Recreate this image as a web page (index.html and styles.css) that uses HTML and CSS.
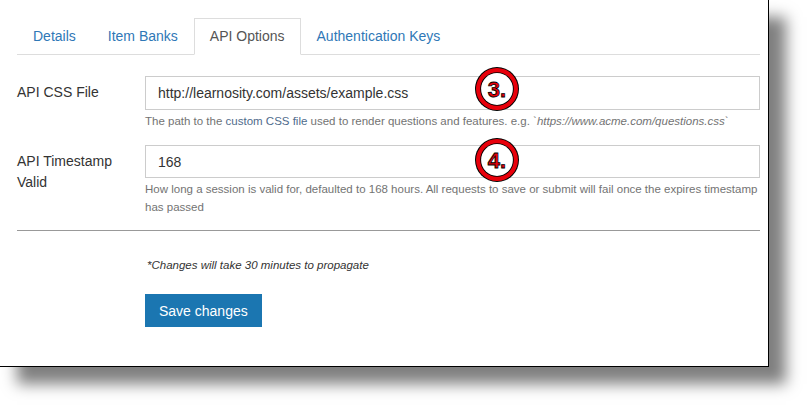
FILE: index.html
```html
<!DOCTYPE html>
<html lang="en">

<head>
    <meta charset="UTF-8">
    <title>API Options</title>
    <link rel="stylesheet" href="styles.css">
</head>

<body>
    <div class="panel">
        <ul class="nav-tabs">
            <li><a href="#">Details</a></li>
            <li><a href="#">Item Banks</a></li>
            <li class="active"><a href="#">API Options</a></li>
            <li><a href="#">Authentication Keys</a></li>
        </ul>

        <form class="settings">
            <div class="form-group first">
                <label class="control-label">API CSS File</label>
                <div class="field">
                    <input class="form-control" type="text" value="http://learnosity.com/assets/example.css">
                    <p class="help-block">The path to the <span class="hl">custom CSS file</span> used to render questions and features. e.g. <em>`https://www.acme.com/questions.css`</em></p>
                    <svg class="callout" width="48" height="48" viewBox="0 0 48 48">
                        <circle cx="24" cy="24" r="22" fill="#000"/>
                        <circle cx="24" cy="24" r="21" fill="#e8000b"/>
                        <circle cx="24" cy="24" r="16.8" fill="#000"/>
                        <circle cx="24" cy="24" r="15.9" fill="#fff"/>
                        <text x="24" y="32" text-anchor="middle">3.</text>
                    </svg>
                </div>
            </div>

            <div class="form-group second">
                <label class="control-label">API Timestamp Valid</label>
                <div class="field">
                    <input class="form-control" type="text" value="168">
                    <p class="help-block">How long a session is valid for, defaulted to 168 hours. All requests to save or submit will fail once the expires timestamp has passed</p>
                    <svg class="callout" width="48" height="48" viewBox="0 0 48 48">
                        <circle cx="24" cy="24" r="22" fill="#000"/>
                        <circle cx="24" cy="24" r="21" fill="#e8000b"/>
                        <circle cx="24" cy="24" r="16.8" fill="#000"/>
                        <circle cx="24" cy="24" r="15.9" fill="#fff"/>
                        <text x="24" y="32" text-anchor="middle">4.</text>
                    </svg>
                </div>
            </div>

            <hr>

            <div class="actions">
                <p class="note">*Changes will take 30 minutes to propagate</p>
                <button type="button" class="btn-primary">Save changes</button>
            </div>
        </form>
    </div>
</body>

</html>
```

FILE: styles.css
```css
html,
body {
    height: 406px;
}

body {
    margin: 0;
    background-color: #fff;
    font-family: "Liberation Sans", Arial, sans-serif;
    font-size: 14px;
    color: #333;
}

.panel {
    width: 769px;
    height: 367px;
    padding-top: 18px;
    box-sizing: border-box;
    background-color: #fff;
    border-right: 1px solid #000;
    border-bottom: 1px solid #000;
    box-shadow: 17px 17px 14px rgba(0, 0, 0, 0.5);
}

.nav-tabs {
    display: flex;
    list-style: none;
    margin: 0 8px 0 17px;
    padding: 0;
    border-bottom: 1px solid #ddd;
}

.nav-tabs li {
    margin-bottom: -1px;
}

.nav-tabs a {
    display: block;
    padding: 8px 15px;
    line-height: 19px;
    border: 1px solid transparent;
    color: #2f78b7;
    text-decoration: none;
}

.nav-tabs .active a {
    color: #555;
    background-color: #fff;
    border-color: #ddd;
    border-bottom-color: transparent;
}

.settings {
    margin: 21px 8px 0 17px;
}

.form-group {
    display: flex;
}

.form-group.first {
    margin-bottom: 15px;
}

.control-label {
    width: 128px;
    flex: none;
    padding-top: 6px;
    line-height: 21px;
    padding-right: 20px;
    box-sizing: border-box;
}

.field {
    flex: 1;
    position: relative;
}

.form-control {
    display: block;
    width: 100%;
    height: 34px;
    box-sizing: border-box;
    padding: 6px 12px;
    border: 1px solid #ccc;
    font-family: inherit;
    font-size: 14px;
    color: #333;
    background-color: #fff;
}

.second .form-control {
    height: 33px;
}

.help-block {
    margin: 2px -6px 0 0;
    font-size: 11.5px;
    line-height: 18px;
    color: #737373;
}

.help-block .hl {
    color: #4f6b8c;
}

.callout {
    position: absolute;
    left: 328px;
    top: -11px;
}

.second .callout {
    top: -9px;
}

.callout text {
    font-family: "Liberation Sans", Arial, sans-serif;
    font-size: 22px;
    font-weight: bold;
    fill: #e8000b;
    stroke: #000;
    stroke-width: 0.8px;
}

hr {
    margin: 14px 0 0;
    border: 0;
    border-top: 1px solid #999;
}

.actions {
    padding-left: 128px;
}

.note {
    margin: 26px 0 0 2px;
    font-size: 11.5px;
    line-height: 17px;
    font-style: italic;
}

.btn-primary {
    display: block;
    margin-top: 20px;
    height: 33px;
    padding: 0 13px;
    border: 1px solid #1b76b1;
    background-color: #1b76b1;
    color: #fff;
    font-family: inherit;
    font-size: 14px;
    cursor: pointer;
}
```
